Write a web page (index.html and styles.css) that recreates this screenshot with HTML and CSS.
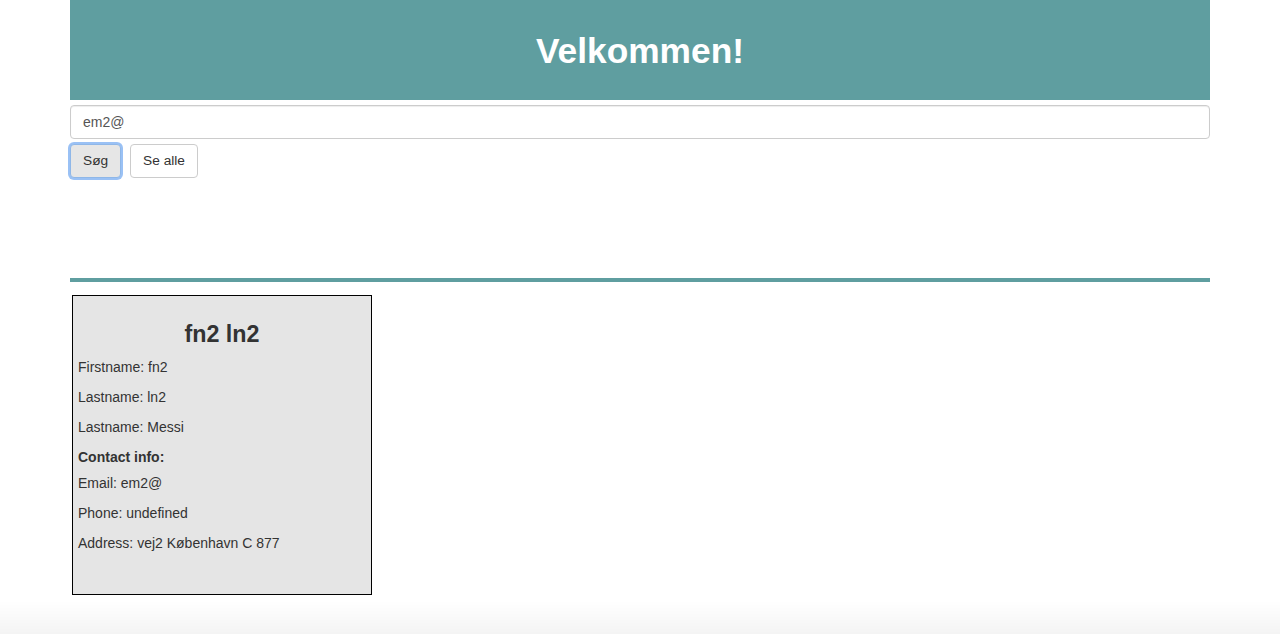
FILE: index.html
```html
<!DOCTYPE html>
<html lang="da">
<head>
<meta charset="utf-8">
<title>Velkommen</title>
<link rel="stylesheet" href="styles.css">
</head>
<body>
<div class="container">
  <header class="banner">
    <h1 class="banner-title">Velkommen!</h1>
  </header>
  <input class="search-input" type="text" value="em2@">
  <div class="actions">
    <button class="btn btn-focus" type="button">Søg</button>
    <button class="btn" type="button">Se alle</button>
  </div>
  <div class="divider"></div>
  <div class="cards">
    <div class="card">
      <h2 class="card-title">fn2 ln2</h2>
      <p class="line">Firstname: fn2</p>
      <p class="line">Lastname: ln2</p>
      <p class="line">Lastname: Messi</p>
      <h5 class="section">Contact info:</h5>
      <p class="line">Email: em2@</p>
      <p class="line">Phone: undefined</p>
      <p class="line">Address: vej2 København C 877</p>
    </div>
  </div>
</div>
<div class="bottom-shade"></div>
</body>
</html>
```
FILE: styles.css
```css
* { box-sizing: border-box; }
html, body { margin: 0; padding: 0; background: #fff; }
body {
  font-family: "Liberation Sans", Arial, Helvetica, sans-serif;
  font-size: 14px;
  line-height: 20px;
  color: #333;
}
.container {
  width: 1140px;
  margin: 0 auto;
}
.banner {
  background: #5f9ea0;
  height: 100px;
  display: flex;
  align-items: center;
  justify-content: center;
  padding-top: 2px;
}
.banner-title {
  margin: 0;
  color: #fff;
  font-size: 35.3px;
  font-weight: bold;
  line-height: 40px;
}
.search-input {
  display: block;
  width: 100%;
  height: 34px;
  margin-top: 5px;
  padding: 6px 12px;
  font-family: inherit;
  font-size: 14px;
  color: #555;
  background: #fff;
  border: 1px solid #ccc;
  border-radius: 4px;
  box-shadow: inset 0 1px 1px rgba(0,0,0,0.075);
  outline: none;
}
.actions {
  display: flex;
  gap: 9px;
  margin-top: 5px;
}
.btn {
  height: 34px;
  padding: 6px 12px;
  font-family: inherit;
  font-size: 13.7px;
  line-height: 20px;
  color: #333;
  background: #fff;
  border: 1px solid #ccc;
  border-radius: 4px;
}
.btn-focus {
  background: #e6e6e6;
  border-color: #8fb7e8;
  box-shadow: 0 0 0 2px rgba(100,160,240,0.65);
}
.divider {
  height: 4px;
  background: #5f9ea0;
  margin-top: 100px;
}
.cards {
  display: flex;
  padding: 13px 2px 0;
}
.card {
  width: 300px;
  height: 300px;
  background: #e5e5e5;
  border: 1px solid #000;
  padding: 5px;
}
.card-title {
  margin: 20px 0 10px;
  font-size: 23.3px;
  font-weight: bold;
  line-height: 26px;
  text-align: center;
  color: #333;
}
.line {
  margin: 0 0 10px;
}
.section {
  margin: 10px 0 8px;
  padding-top: 2px;
  font-size: 14px;
  font-weight: bold;
  line-height: 16px;
}
.bottom-shade {
  position: fixed;
  left: 0;
  right: 0;
  bottom: 0;
  height: 34px;
  background: linear-gradient(to bottom, rgba(0,0,0,0), rgba(0,0,0,0.045));
  pointer-events: none;
}
```
